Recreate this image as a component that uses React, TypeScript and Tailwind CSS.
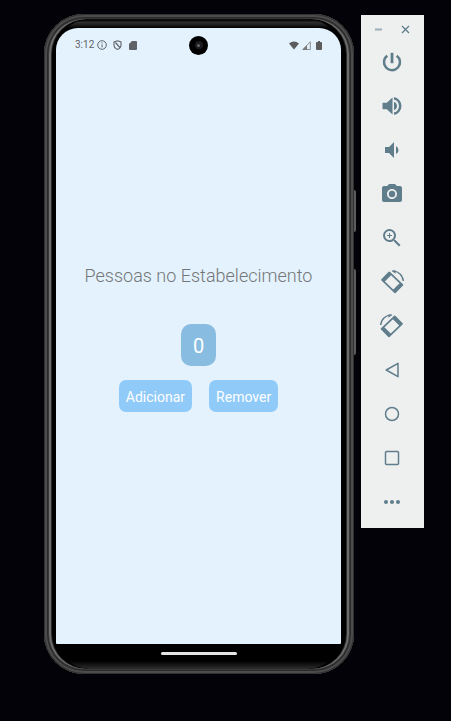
import { useState } from "react";
import type { ReactNode } from "react";
import { MdVolumeDown, MdPhotoCamera, MdZoomIn, MdMoreHoriz } from "react-icons/md";

function InfoIcon() {
  return (
    <svg viewBox="0 0 10 10" className="size-[10px]" fill="none" stroke="currentColor" aria-hidden="true">
      <circle cx="5" cy="5" r="4.3" strokeWidth="1" />
      <path d="M5 4.4v3M5 2.4v1.1" strokeWidth="1" />
    </svg>
  );
}

function ShieldIcon() {
  return (
    <svg viewBox="0 0 9 10" className="h-[10px] w-[9px]" fill="none" stroke="currentColor" aria-hidden="true">
      <path d="M4.5.8 8 2v2.8C8 7 6.500 8.700 4.500 9.400 2.500 8.700 1 7 1 4.800V2z" strokeWidth="1.100" />
      <path d="M2.500 2.500 6.800 7.500" strokeWidth="1.200" />
    </svg>
  );
}

function SdCardIcon() {
  return (
    <svg viewBox="0 0 8 9" className="h-[9px] w-[8px]" fill="currentColor" aria-hidden="true">
      <path d="M3 0h4q1 0 1 1v7q0 1-1 1H1Q0 9 0 8V3z" />
    </svg>
  );
}

function StatusBar() {
  return (
    <div className="grid h-[34px] grid-cols-[1fr_auto_1fr] items-center px-[19px] text-[#5f6368]">
      <div className="flex items-center">
        <span className="w-[22px] text-[10px] leading-3">3:12</span>
        <InfoIcon />
        <span className="ml-1.5 flex items-center gap-[7px]">
          <ShieldIcon />
          <SdCardIcon />
        </span>
      </div>
      <div className="flex size-[19px] items-center justify-center rounded-full bg-black">
        <div className="flex size-2 items-center justify-center rounded-full bg-[#1c1c1e]">
          <div className="size-[3px] rounded-full bg-[#66666a]" />
        </div>
      </div>
      <div className="flex items-center justify-end gap-[3px]">
        <svg viewBox="0 0 10 9" className="h-[9px] w-[10px]" fill="#5c5c5c" aria-hidden="true">
          <path d="M0 2.500Q5-1.500 10 2.500L5 8.500z" />
        </svg>
        <svg viewBox="0 0 9 9" className="size-[9px]" aria-hidden="true">
          <path d="M.8 8.500 8.300.8v7.700z" fill="none" stroke="#777" strokeWidth=".8" />
          <path d="M.5 8.800 5 4.200v4.600z" fill="#777" />
        </svg>
        <svg viewBox="0 0 6 9" className="ml-0.5 h-[9px] w-[6px]" fill="#5c5c5c" aria-hidden="true">
          <path d="M2 0h2v1h1q1 0 1 1v6q0 1-1 1H1Q0 9 0 8V2q0-1 1-1h1z" />
        </svg>
      </div>
    </div>
  );
}

function CounterScreen() {
  const [count, setCount] = useState(0);
  const button = "h-8 rounded-[7px] bg-[#90caf9] px-[7px] pt-0.5 text-[14px] leading-5 text-white";
  return (
    <main className="flex flex-1 flex-col items-center justify-center pb-[34px]">
      <h1 className="text-[18px] leading-8 font-[350] text-[#747678]">Pessoas no Estabelecimento</h1>
      <output className="mt-8 flex h-[42px] min-w-[35px] items-center justify-center rounded-[10px] bg-[#88bce0] px-2 pt-0.5 text-[20px] leading-6 text-white">
        {count}
      </output>
      <div className="mt-3.5 flex gap-[17px]">
        <button type="button" className={button} onClick={() => setCount(count + 1)}>
          Adicionar
        </button>
        <button type="button" className={button} onClick={() => setCount(Math.max(0, count - 1))}>
          Remover
        </button>
      </div>
    </main>
  );
}

function Phone() {
  return (
    <div className="relative flex flex-1 flex-col rounded-[40px] bg-[linear-gradient(to_bottom,#0c0c0c_7px,#303030_8px,#1c1c1c_11px,#000_14px,#000_calc(100%-13px),#1c1c1c_calc(100%-8px),#343434_calc(100%-4px))] pt-3.5 pr-[13px] pb-3 pl-3 shadow-[inset_0_0_0_1px_#303030,inset_0_0_0_3px_#4c4c4c,inset_0_0_0_4px_#2a2a2a,inset_0_0_0_5px_#383838,inset_2px_0_0_5px_#6c6c6c,inset_-2px_0_0_5px_#6c6c6c,inset_3px_0_0_5px_#2a2a2a,inset_-3px_0_0_5px_#2a2a2a,inset_6px_0_0_5px_#000,inset_-7px_0_0_5px_#000]">
      <div className="absolute top-[176px] -right-0.5 h-[42px] w-0.5 rounded-r-sm bg-[#5a5c5b]" />
      <div className="absolute top-[255px] -right-0.5 h-[86px] w-0.5 rounded-r-sm bg-[#5a5c5b]" />
      <div className="flex flex-1 flex-col rounded-t-[22px] rounded-b-[1px] bg-[#e3f2fd]">
        <StatusBar />
        <CounterScreen />
      </div>
      <div className="flex h-[18px] items-center justify-center">
        <div className="h-[3px] w-[76px] rounded-full bg-[#e4e6e6]" />
      </div>
    </div>
  );
}

function RotateIcon({ mirrored = false }: { mirrored?: boolean }) {
  return (
    <svg viewBox="0 0 24 24" className="size-6 overflow-visible" fill="none" stroke="currentColor" aria-hidden="true">
      <g transform={mirrored ? "translate(24 0) scale(-1 1)" : undefined}>
        <path d="M2 9.800 9.300 2.400 22.400 14.900 15 22.300z" strokeWidth="1.700" strokeLinejoin="round" />
        <path d="M3 10.800 10.300 3.400M14 21.300 21.400 13.900" strokeWidth="3.600" />
        <path d="M12.500 1.200C18 .8 22.800 5.200 23.300 11" strokeWidth="1.400" />
        <path d="M11.500.8 15.500.3 15.500 3.800z" fill="currentColor" stroke="none" />
      </g>
    </svg>
  );
}

function OutlineIcon({ children }: { children: ReactNode }) {
  return (
    <svg viewBox="0 0 24 24" className="size-6" fill="none" stroke="currentColor" strokeWidth="1.500" strokeLinejoin="round" aria-hidden="true">
      {children}
    </svg>
  );
}

function PowerIcon() {
  return (
    <svg viewBox="0 0 24 24" className="size-6" fill="none" stroke="currentColor" strokeWidth="2.500" aria-hidden="true">
      <path d="M12 2.800v10.400" strokeWidth="2.800" />
      <path d="M7.300 5.700a8 8 0 1 0 9.400 0" />
    </svg>
  );
}

function VolumeUpIcon() {
  return (
    <svg viewBox="0 0 24 24" className="size-6" fill="currentColor" aria-hidden="true">
      <path d="M2.500 8.800v6.400h4.300l5.700 5.400V3.400L6.800 8.800zM14 7.700v8.600q3-1.300 3-4.300t-3-4.300z" />
      <path d="M14 4.200a8 8 0 0 1 0 15.600" fill="none" stroke="currentColor" strokeWidth="2.500" />
    </svg>
  );
}

const tools: { label: string; icon: ReactNode }[] = [
  { label: "Power", icon: <PowerIcon /> },
  { label: "Volume up", icon: <VolumeUpIcon /> },
  { label: "Volume down", icon: <MdVolumeDown className="size-6" /> },
  { label: "Take screenshot", icon: <MdPhotoCamera className="size-6" /> },
  { label: "Zoom", icon: <MdZoomIn className="size-6" /> },
  { label: "Rotate left", icon: <RotateIcon /> },
  { label: "Rotate right", icon: <RotateIcon mirrored /> },
  { label: "Back", icon: <OutlineIcon><path d="M6.200 12 18 5.300v13.400z" /></OutlineIcon> },
  { label: "Home", icon: <OutlineIcon><circle cx="12" cy="12" r="6.500" /></OutlineIcon> },
  { label: "Overview", icon: <OutlineIcon><rect x="5.500" y="5.500" width="13" height="13" rx="1" /></OutlineIcon> },
  { label: "More", icon: <MdMoreHoriz className="size-6" /> },
];

function Toolbar() {
  return (
    <aside className="mt-px w-[63px] self-start bg-[#eef0f0] pr-px pb-1 text-[#607d8b]">
      <div className="flex h-[25px] items-center justify-center gap-[18px] pt-1">
        <button type="button" aria-label="Minimize" className="flex size-[9px] items-center">
          <svg viewBox="0 0 9 9" className="size-[9px]" stroke="#9aafb8" strokeWidth="2" aria-hidden="true">
            <path d="M1 4.500h7" />
          </svg>
        </button>
        <button type="button" aria-label="Close" className="flex size-[9px] items-center">
          <svg viewBox="0 0 9 9" className="size-[9px]" stroke="currentColor" strokeWidth="1.300" aria-hidden="true">
            <path d="M1 1l7 7M8 1 1 8" />
          </svg>
        </button>
      </div>
      {tools.map((tool) => (
        <button key={tool.label} type="button" aria-label={tool.label} className="flex h-11 w-full items-center justify-center">
          {tool.icon}
        </button>
      ))}
    </aside>
  );
}

export default function App() {
  return (
    <div className="flex min-h-screen gap-[7px] bg-[#020208] pt-3.5 pr-[27px] pb-[47px] pl-11 font-[Roboto,sans-serif]">
      <Phone />
      <Toolbar />
    </div>
  );
}
